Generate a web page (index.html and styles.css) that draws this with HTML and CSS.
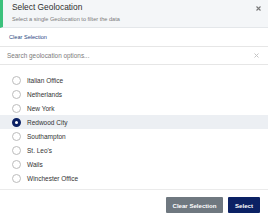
FILE: index.html
```html
<!DOCTYPE html>
<html>
<head>
<meta charset="utf-8">
<link rel="stylesheet" href="styles.css">
</head>
<body>
<div class="dialog">
  <div class="header">
    <div class="titles">
      <div class="title">Select Geolocation</div>
      <div class="subtitle">Select a single Geolocation to filter the data</div>
    </div>
    <svg class="close" width="5" height="5" viewBox="0 0 5 5"><path d="M0.5 0.5L4.5 4.5M4.5 0.5L0.5 4.5" stroke="#7a7a7a" stroke-width="1.1"/></svg>
  </div>
  <div class="clear-row"><span class="link">Clear Selection</span></div>
  <div class="search">
    <span class="placeholder">Search geolocation options...</span>
    <svg class="clear-x" width="5" height="5" viewBox="0 0 5 5"><path d="M0.5 0.5L4.5 4.5M4.5 0.5L0.5 4.5" stroke="#c4c4c4" stroke-width="1"/></svg>
  </div>
  <div class="list">
    <div class="row"><span class="radio"></span><span class="label">Italian Office</span></div>
    <div class="row"><span class="radio"></span><span class="label">Netherlands</span></div>
    <div class="row"><span class="radio"></span><span class="label">New York</span></div>
    <div class="row selected"><span class="radio on"></span><span class="label">Redwood City</span></div>
    <div class="row"><span class="radio"></span><span class="label">Southampton</span></div>
    <div class="row"><span class="radio"></span><span class="label">St. Leo's</span></div>
    <div class="row"><span class="radio"></span><span class="label">Wails</span></div>
    <div class="row"><span class="radio"></span><span class="label">Winchester Office</span></div>
  </div>
  <div class="footer">
    <button class="btn btn-gray">Clear Selection</button>
    <button class="btn btn-navy">Select</button>
  </div>
</div>
</body>
</html>
```
FILE: styles.css
```css
html, body {
  margin: 0;
  padding: 0;
  background: #ffffff;
}
body {
  width: 268px;
  height: 219px;
  overflow: hidden;
  font-family: "Liberation Sans", Arial, sans-serif;
  color: #333333;
}
.dialog {
  display: flex;
  flex-direction: column;
  width: 268px;
}
.header {
  box-sizing: border-box;
  height: 28px;
  background: #f4f6f8;
  border-left: 3px solid #3cc17c;
  border-bottom: 1px solid #e4e7ea;
  padding: 3px 9px 0 9px;
  display: flex;
  justify-content: space-between;
  align-items: flex-start;
}
.title {
  font-size: 8.4px;
  line-height: 9px;
  color: #2f2f2f;
}
.subtitle {
  margin-top: 4px;
  font-size: 5.6px;
  line-height: 7px;
  color: #7a7a7a;
}
.close {
  margin-top: 3px;
  margin-right: -2px;
}
.clear-row {
  height: 18px;
  display: flex;
  align-items: center;
  padding-left: 9px;
}
.link {
  font-size: 5.6px;
  color: #2a4680;
}
.search {
  box-sizing: border-box;
  height: 19px;
  border-top: 1px solid #e6e6e6;
  border-bottom: 1px solid #e6e6e6;
  display: flex;
  align-items: center;
  justify-content: space-between;
  padding: 0 9px 0 7px;
}
.placeholder {
  font-size: 6.4px;
  color: #7b7b7b;
}
.list {
  padding: 8px 0 4px 0;
  display: flex;
  flex-direction: column;
}
.row {
  height: 14px;
  display: flex;
  align-items: center;
  padding-left: 12px;
}
.row.selected {
  background: #eceff3;
}
.radio {
  box-sizing: border-box;
  width: 9px;
  height: 9px;
  border-radius: 50%;
  border: 1px solid #bcbcbc;
  background: #ffffff;
  flex: none;
}
.radio.on {
  border: 3px solid #0b2164;
  background: #ffffff;
}
.label {
  margin-left: 6px;
  font-size: 6.5px;
  color: #333333;
}
.footer {
  border-top: 1px solid #ebebeb;
  padding: 7px 8px 0 0;
  display: flex;
  justify-content: flex-end;
  gap: 5px;
}
.btn {
  height: 16px;
  border: none;
  margin: 0;
  padding: 0;
  font-family: "Liberation Sans", Arial, sans-serif;
  font-size: 6.1px;
  font-weight: bold;
  color: #ffffff;
  border-radius: 1px;
}
.btn-gray {
  width: 57px;
  background: #6f7880;
}
.btn-navy {
  width: 32px;
  background: #0b2164;
}
```
